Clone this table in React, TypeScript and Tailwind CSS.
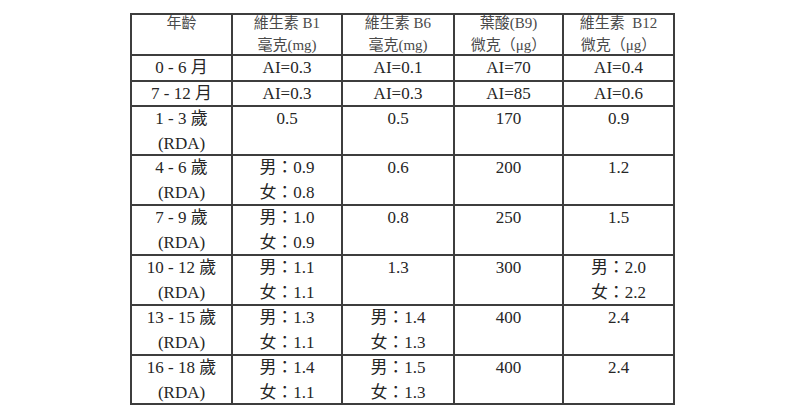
import React from "react";

type Row = { cells: string[][] };

const rows: Row[] = [
  { cells: [["0 - 6 月"], ["AI=0.3"], ["AI=0.1"], ["AI=70"], ["AI=0.4"]] },
  { cells: [["7 - 12 月"], ["AI=0.3"], ["AI=0.3"], ["AI=85"], ["AI=0.6"]] },
  { cells: [["1 - 3 歲", "(RDA)"], ["0.5"], ["0.5"], ["170"], ["0.9"]] },
  { cells: [["4 - 6 歲", "(RDA)"], ["男：0.9", "女：0.8"], ["0.6"], ["200"], ["1.2"]] },
  { cells: [["7 - 9 歲", "(RDA)"], ["男：1.0", "女：0.9"], ["0.8"], ["250"], ["1.5"]] },
  { cells: [["10 - 12 歲", "(RDA)"], ["男：1.1", "女：1.1"], ["1.3"], ["300"], ["男：2.0", "女：2.2"]] },
  { cells: [["13 - 15 歲", "(RDA)"], ["男：1.3", "女：1.1"], ["男：1.4", "女：1.3"], ["400"], ["2.4"]] },
  { cells: [["16 - 18 歲", "(RDA)"], ["男：1.4", "女：1.1"], ["男：1.5", "女：1.3"], ["400"], ["2.4"]] },
];

const headers: string[][] = [
  ["年齡"],
  ["維生素 B1", "毫克(mg)"],
  ["維生素 B6", "毫克(mg)"],
  ["葉酸(B9)", "微克（μg）"],
  ["維生素  B12", "微克（μg）"],
];

const font = {
  fontFamily: '"Liberation Serif", "Noto Sans CJK TC", serif',
};

export default function App() {
  return (
    <div className="min-h-[415px] w-[800px] bg-white pt-[13px] pl-[130px]" style={font}>
      <div className="grid w-fit grid-cols-[99px_108px_110px_107px_109px] grid-rows-[39px_24px_23px_47px_48px_48px_48px_48px_47px] gap-[2px] bg-[#3d3d3d] p-[2px]">
        {headers.map((h, i) => (
          <div key={`h${i}`} className="overflow-hidden bg-white text-center text-[15px] leading-[22px] text-[#4a4a4a] whitespace-pre">
            <div className="-mt-[3px]">
              {h.map((line, j) => (
                <div key={j}>{line}</div>
              ))}
            </div>
          </div>
        ))}
        {rows.map((r, ri) =>
          r.cells.map((c, ci) => (
            <div key={`${ri}-${ci}`} className="overflow-hidden bg-white text-center text-[17px] leading-[25px] text-[#262626]">
              <div className="-mt-[1px]">
                {c.map((line, j) => (
                  <div key={j}>{line}</div>
                ))}
              </div>
            </div>
          ))
        )}
      </div>
    </div>
  );
}
